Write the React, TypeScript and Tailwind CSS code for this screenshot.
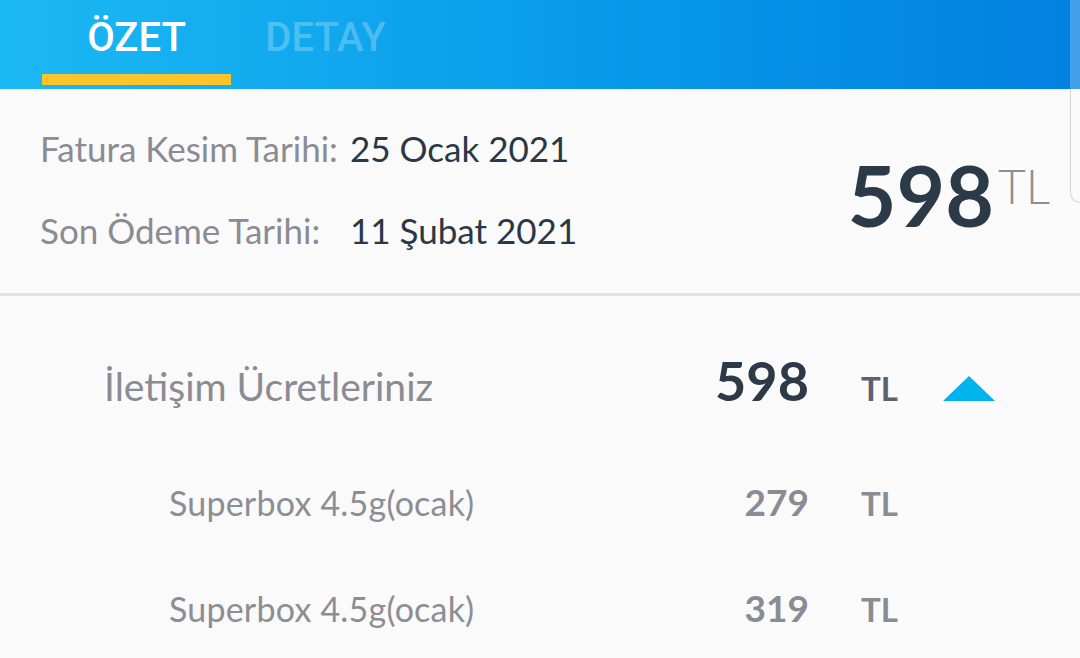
const tabs = [
  { label: "ÖZET", active: true },
  { label: "DETAY", active: false },
]

const items = [
  { label: "Superbox 4.5g(ocak)", amount: "279" },
  { label: "Superbox 4.5g(ocak)", amount: "319" },
]

function Caret() {
  return (
    <svg width="52" height="25" viewBox="0 0 52 25" className="mb-[4px]">
      <polygon points="26,0 52,25 0,25" fill="#00b5ed" />
    </svg>
  )
}

export default function App() {
  return (
    <div className="relative h-[658px] w-full overflow-hidden bg-[#fafafa] font-['Lato',sans-serif]">
      {/* Tabs */}
      <div className="flex h-[89px] bg-linear-to-r from-[#1bb9f4] to-[#0280e0] px-[42px]">
        {tabs.map((tab) => (
          <div key={tab.label} className="flex w-[189px] flex-col items-center pt-[18px]">
            <span
              className={
                tab.active
                  ? "font-['Roboto',sans-serif] text-[40px] leading-none font-medium text-white"
                  : "font-['Roboto',sans-serif] text-[40px] leading-none font-medium text-white/25"
              }
            >
              {tab.label}
            </span>
            {tab.active && <div className="mt-[16px] h-[11px] w-full bg-[#fcc42b]" />}
          </div>
        ))}
      </div>

      {/* Dates + total */}
      <div className="flex justify-between pt-[38px] pr-[30px] pb-[42px] pl-[40px]">
        <div className="grid grid-cols-[310px_auto] gap-y-[40px] text-[35px] leading-[42px]">
          <span className="text-[#8b8b93]">Fatura Kesim Tarihi:</span>
          <span className="text-[#2a3846]">25 Ocak 2021</span>
          <span className="text-[#8b8b93]">Son Ödeme Tarihi:</span>
          <span className="text-[#2a3846]">11 Şubat 2021</span>
        </div>
        <div className="flex items-start">
          <span className="mt-[26px] text-[84px] leading-none font-bold text-[#2c3a48]">598</span>
          <span className="mt-[35px] ml-[4px] text-[48px] leading-none font-light text-[#8e8e94]">TL</span>
        </div>
      </div>

      <div className="h-[3px] bg-[#e3e3e3]" />

      {/* Breakdown */}
      <div className="flex flex-col">
        <div className="mt-[58px] flex items-baseline pr-[85px]">
          <span className="flex-1 pl-[104px] text-[39px] leading-none text-[#8b8b93]">
            İletişim Ücretleriniz
          </span>
          <span className="w-[200px] text-right text-[54px] leading-none font-bold text-[#2c3a48]">598</span>
          <span className="w-[134px] pl-[52px] text-[33px] leading-none font-bold text-[#59636d]">TL</span>
          <Caret />
        </div>

        {items.map((item, i) => (
          <div
            key={item.amount}
            className={i === 0 ? "mt-[75px] flex items-baseline pr-[137px]" : "mt-[69px] flex items-baseline pr-[137px]"}
          >
            <span className="flex-1 pl-[169px] text-[34px] leading-none tracking-[0.2px] text-[#8d8d95]">
              {item.label}
            </span>
            <span className="w-[200px] text-right text-[37px] leading-none font-bold text-[#8b8b93]">
              {item.amount}
            </span>
            <span className="w-[134px] pl-[52px] text-[33px] leading-none font-bold text-[#8b8b93]">TL</span>
          </div>
        ))}
      </div>

      {/* Edge handle */}
      <div className="absolute top-0 right-0 flex w-[10px] flex-col">
        <div className="h-[89px] bg-white/25" />
        <div className="h-[114px] rounded-bl-[10px] border-b border-l border-[#d4d4d4]" />
      </div>
    </div>
  )
}
